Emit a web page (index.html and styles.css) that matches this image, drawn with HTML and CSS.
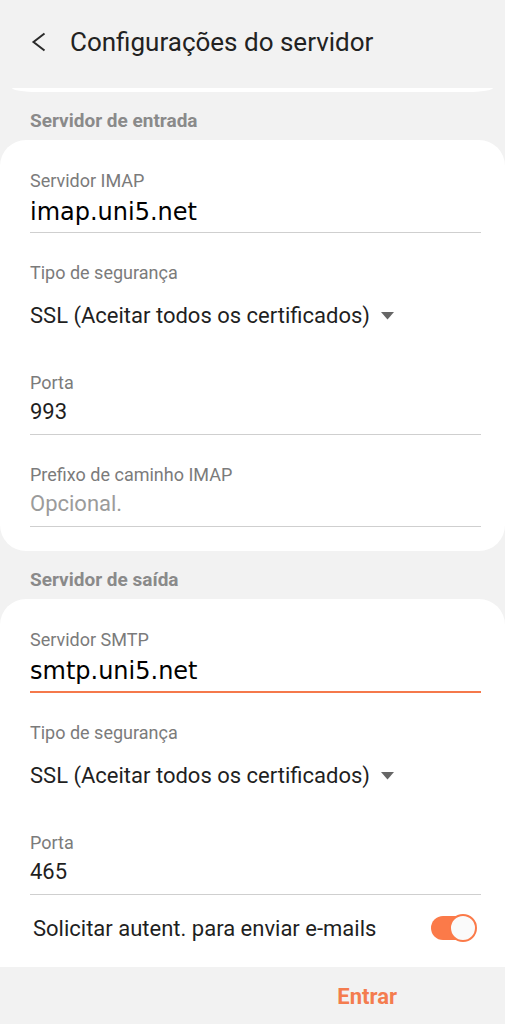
FILE: index.html
```html
<!DOCTYPE html>
<html lang="pt">
<head>
  <meta charset="UTF-8" />
  <meta name="viewport" content="width=device-width, initial-scale=1.0" />
  <title>Configurações do servidor</title>
  <link rel="stylesheet" href="styles.css">
</head>
<body>
  <header class="app-bar">
    <svg class="back" width="20" height="20" viewBox="0 0 20 20">
      <path d="M15.5 1.5 L4.5 10 L15.5 18.5" fill="none" stroke="#2b2b2b" stroke-width="2" />
    </svg>
    <h1 class="title">Configurações do servidor</h1>
  </header>
  <div class="card-tail"></div>

  <h2 class="section-title">Servidor de entrada</h2>
  <section class="card">
    <div class="field">
      <div class="label">Servidor IMAP</div>
      <div class="value mono">imap.uni5.net</div>
    </div>
    <div class="field select">
      <div class="label">Tipo de segurança</div>
      <div class="select-value">
        SSL (Aceitar todos os certificados)
        <svg width="13" height="8" viewBox="0 0 13 8"><path d="M0 0 H13 L6.5 7.5 Z" fill="#666" /></svg>
      </div>
    </div>
    <div class="field">
      <div class="label">Porta</div>
      <div class="value">993</div>
    </div>
    <div class="field">
      <div class="label">Prefixo de caminho IMAP</div>
      <div class="value placeholder">Opcional.</div>
    </div>
  </section>

  <h2 class="section-title">Servidor de saída</h2>
  <section class="card open-bottom">
    <div class="field">
      <div class="label">Servidor SMTP</div>
      <div class="value mono focused">smtp.uni5.net</div>
    </div>
    <div class="field select">
      <div class="label">Tipo de segurança</div>
      <div class="select-value">
        SSL (Aceitar todos os certificados)
        <svg width="13" height="8" viewBox="0 0 13 8"><path d="M0 0 H13 L6.5 7.5 Z" fill="#666" /></svg>
      </div>
    </div>
    <div class="field">
      <div class="label">Porta</div>
      <div class="value">465</div>
    </div>
    <div class="switch-row">
      <span>Solicitar autent. para enviar e-mails</span>
      <span class="switch on"></span>
    </div>
  </section>

  <footer class="bottom-bar">
    <button class="action">Entrar</button>
  </footer>
</body>
</html>
```

FILE: styles.css
```css
body {
  margin: 0;
  background: #f2f2f2;
  font-family: Roboto, "Noto Sans", sans-serif;
  color: #1f1f1f;
}

.app-bar {
  height: 84px;
  padding: 0 0 4px 29px;
  display: flex;
  align-items: center;
}

.back {
  flex: none;
}

.title {
  margin: 0 0 0 21px;
  font-size: 26px;
  font-weight: 400;
  color: #222;
}

.card-tail {
  height: 4px;
  margin: 0 12px;
  background: #fff;
  border-radius: 0 0 26px 26px / 0 0 4px 4px;
}

.section-title {
  margin: 0;
  padding: 18px 30px 8px;
  font-size: 19px;
  line-height: 22px;
  font-weight: 700;
  color: #8a8a8a;
}

.card {
  background: #fff;
  border-radius: 26px;
  padding: 30px 24px 19px 30px;
}

.card.open-bottom {
  border-radius: 26px 26px 0 0;
}

.card .field:last-child {
  margin-bottom: 5px;
}

.field + .field {
  margin-top: 29px;
}

.label {
  font-size: 18px;
  line-height: 22px;
  color: #7b7b7b;
}

.value {
  font-size: 22px;
  line-height: 36px;
  padding-bottom: 4px;
  border-bottom: 1px solid #cfcfcf;
}

.value.mono {
  font-family: "DejaVu Sans", sans-serif;
  font-size: 24px;
  color: #000;
  line-height: 40px;
  padding-bottom: 0;
}

.value.focused {
  border-bottom: 2px solid #f5794b;
}

.value.placeholder {
  color: #9b9b9b;
}

.select {
  padding-bottom: 7px;
}

.select-value {
  margin-top: 12px;
  font-size: 22px;
  line-height: 40px;
  display: flex;
  align-items: center;
  gap: 11px;
}

.switch-row {
  margin: 13px 4px 0 3px;
  height: 40px;
  display: flex;
  align-items: center;
  justify-content: space-between;
  font-size: 22px;
}

.switch {
  position: relative;
  width: 46px;
  height: 28px;
}

.switch::before {
  content: "";
  position: absolute;
  left: 0;
  top: 2px;
  width: 40px;
  height: 24px;
  border-radius: 12px;
  background: #fb7a49;
}

.switch::after {
  content: "";
  position: absolute;
  right: 0;
  top: 0;
  width: 24px;
  height: 24px;
  border-radius: 50%;
  background: #fafafa;
  border: 2px solid #fb7a49;
}

.bottom-bar {
  height: 56px;
  padding: 2px 108px 0 0;
  display: flex;
  justify-content: flex-end;
}

.action {
  background: none;
  border: none;
  padding: 0;
  font-family: Roboto, sans-serif;
  font-size: 22px;
  line-height: 56px;
  font-weight: 700;
  color: #f47c4f;
}
```
